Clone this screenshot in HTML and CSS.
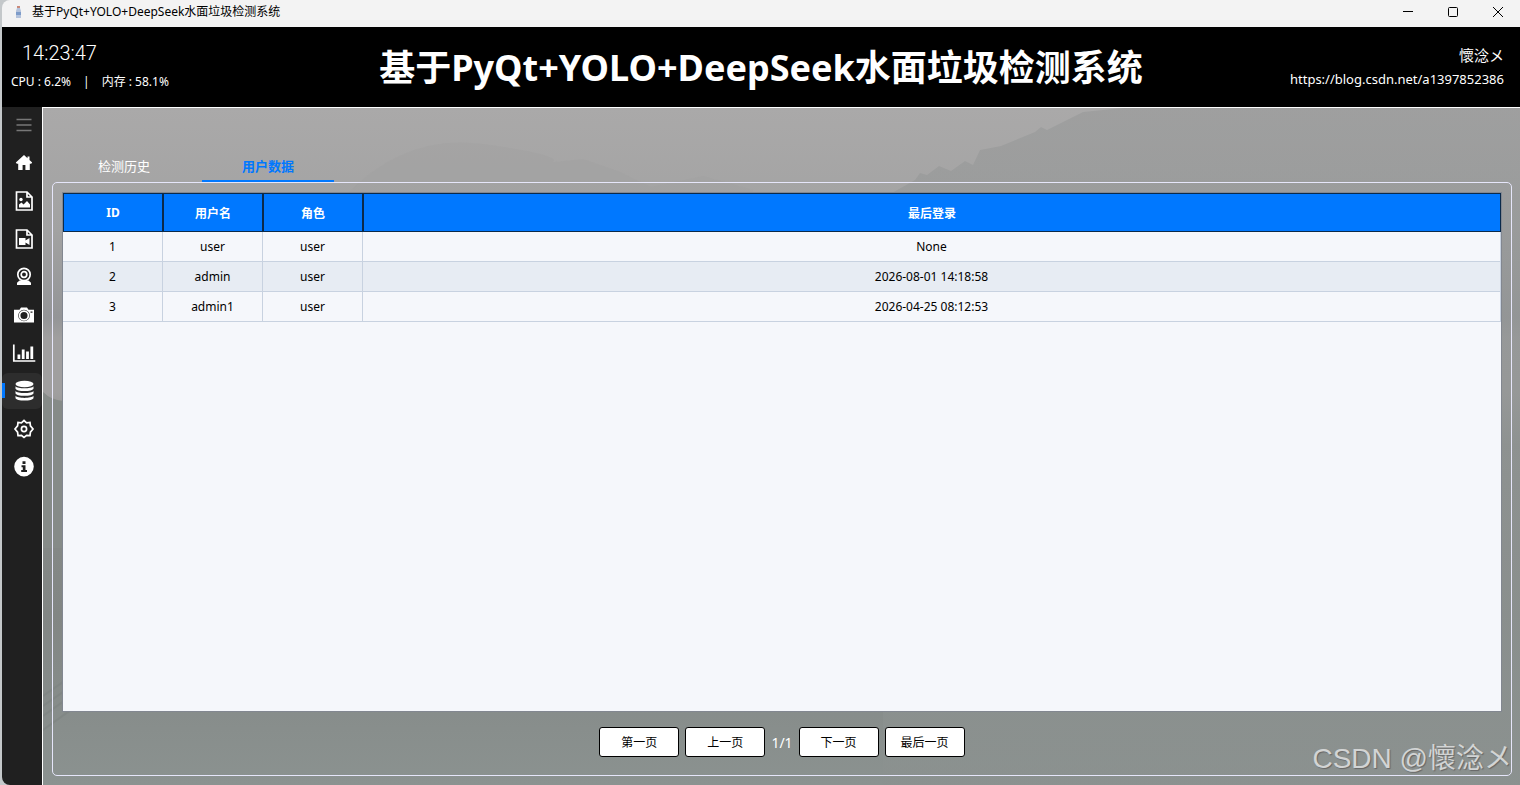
FILE: index.html
```
<!DOCTYPE html>
<html lang="zh-CN">
<head>
    <meta charset="UTF-8">
    <meta name="viewport" content="width=device-width, initial-scale=1.0">
    <title>基于PyQt+YOLO+DeepSeek水面垃圾检测系统</title>
    <link rel="stylesheet" href="styles.css">
</head>
<body>
    <div class="window">
        <div class="titlebar">
            <svg class="app-icon" width="8" height="14" viewBox="0 0 8 14">
                <rect x="3" y="1" width="3" height="2" fill="#c98a7a"/>
                <path d="M3 3h3l1 3v7H2V6z" fill="#b4c3dc"/>
                <rect x="2" y="7" width="5" height="3" fill="#7e9cc9"/>
            </svg>
            <span class="titlebar-text">基于PyQt+YOLO+DeepSeek水面垃圾检测系统</span>
            <div class="window-controls">
                <button type="button" aria-label="最小化"><svg width="12" height="12" viewBox="0 0 12 12"><path d="M1 5.500h10"/></svg></button>
                <button type="button" aria-label="最大化"><svg width="12" height="12" viewBox="0 0 12 12"><rect x="1.500" y="1.500" width="9" height="9" rx="1"/></svg></button>
                <button type="button" aria-label="关闭"><svg width="12" height="12" viewBox="0 0 12 12"><path d="M1 1l10 10M11 1L1 11"/></svg></button>
            </div>
        </div>

        <header class="header">
            <div class="status">
                <div class="clock">14:23:47</div>
                <div class="usage"><span>CPU : 6.2%</span><span>|</span><span>内存 : 58.1%</span></div>
            </div>
            <h1>基于PyQt+YOLO+DeepSeek水面垃圾检测系统</h1>
            <div class="author">
                <div class="author-name">懷淰メ</div>
                <a href="https://blog.csdn.net/a1397852386">https://blog.csdn.net/a1397852386</a>
            </div>
        </header>

        <div class="body">
            <nav class="sidebar">
                <button type="button" class="menu" aria-label="菜单">
                    <svg viewBox="0 0 24 24"><path class="line" d="M4.500 6.500h15M4.500 12h15M4.500 17.500h15"/></svg>
                </button>
                <button type="button" aria-label="首页">
                    <svg viewBox="0 0 24 24"><path d="M12 4L3.800 11.600l1 1.200h1.400V19h4.400v-5h2.800v5h4.400v-6.200h1.400l1-1.200-2.700-2.500V5.500h-2v1.800z"/></svg>
                </button>
                <button type="button" aria-label="图片检测">
                    <svg viewBox="0 0 24 24"><path class="line" d="M4.500 3h10.500l5 5v13H4.500zM15 3v5h5"/><circle cx="9" cy="10.500" r="1.700"/><path d="M7 18.500v-3l2.500-2 2 2 3.500-3.500 3 3.500v3z"/></svg>
                </button>
                <button type="button" aria-label="视频检测">
                    <svg viewBox="0 0 24 24"><path class="line" d="M4.500 3h10.500l5 5v13H4.500zM15 3v5h5"/><path d="M7 11h6.500v2.500l4-2.500v7l-4-2.500V18H7z"/></svg>
                </button>
                <button type="button" aria-label="摄像头">
                    <svg viewBox="0 0 24 24"><circle class="line" cx="12" cy="9.500" r="6.200"/><circle class="line" cx="12" cy="9.500" r="2.800"/><path d="M7.500 15.500h9l2.500 2.200v2.300H5v-2.300z"/></svg>
                </button>
                <button type="button" aria-label="拍照">
                    <svg viewBox="0 0 24 24"><path fill-rule="evenodd" d="M2 6.800h5.500L9 4.500h6l1.500 2.300H22v12.700H2zM12 6.700a5.800 5.800 0 1 0 0 11.600 5.800 5.800 0 0 0 0-11.600zM18.500 8.500v1.200h2V8.500z"/><circle class="line" cx="12" cy="12.500" r="4.400"/></svg>
                </button>
                <button type="button" aria-label="统计">
                    <svg viewBox="0 0 24 24"><path class="line" d="M1.800 3.500v16.500h21.500"/><path d="M5.500 13.500h2.800V18H5.500zM9.800 8.500h2.800V18H9.800zM14.100 10.500h2.800V18h-2.800zM18.400 5.500h2.800V18h-2.800z"/></svg>
                </button>
                <button type="button" class="active" aria-label="数据">
                    <svg viewBox="0 0 24 24"><ellipse cx="12.500" cy="5" rx="9" ry="3.200"/><path d="M3.500 7.200c2 2.800 16 2.800 18 0v2.200c0 3.400-18 3.400-18 0zM3.500 12c2 2.800 16 2.800 18 0v2.200c0 3.400-18 3.400-18 0zM3.500 16.800c2 2.800 16 2.800 18 0V19c0 3.400-18 3.400-18 0z"/></svg>
                </button>
                <button type="button" aria-label="设置">
                    <svg viewBox="0 0 24 24"><path class="line" d="M12 3.500l2.600 2.300 3.400-.3.400 3.400 2.600 3.100-2.600 3.100-.4 3.400-3.400-.2-2.600 2.200-2.600-2.200-3.400.2-.4-3.400L3 12l2.600-3.100.4-3.400 3.400.3z"/><circle class="line" cx="12" cy="12" r="2.600"/></svg>
                </button>
                <button type="button" aria-label="关于">
                    <svg viewBox="0 0 24 24"><path fill-rule="evenodd" d="M12 1.800a9.800 9.800 0 1 0 0 19.600 9.800 9.800 0 0 0 0-19.600zM10.500 6.200h3v2.700h-3zM9.500 10.300h4v4.600H15v2H9.200v-2h1.600v-2.700H9.500z"/></svg>
                </button>
            </nav>

            <main class="content">
                <!-- misty lake backdrop -->
                <svg class="backdrop" viewBox="0 0 1477 677" preserveAspectRatio="none" aria-hidden="true">
                    <defs>
                        <linearGradient id="sky" x1="0" y1="0" x2="0" y2="1">
                            <stop offset="0" stop-color="#aaa9a9"/>
                            <stop offset="0.18" stop-color="#a2a2a2"/>
                            <stop offset="0.31" stop-color="#949597"/>
                            <stop offset="0.34" stop-color="#a09f9f"/>
                            <stop offset="0.42" stop-color="#a09f9f"/>
                            <stop offset="0.5" stop-color="#878b89"/>
                            <stop offset="0.75" stop-color="#828684"/>
                            <stop offset="1" stop-color="#8b9290"/>
                        </linearGradient>
                        <linearGradient id="hill" x1="0" y1="0" x2="0" y2="1">
                            <stop offset="0" stop-color="#9a9b9b"/>
                            <stop offset="0.3" stop-color="#939696"/>
                            <stop offset="1" stop-color="#8b918f"/>
                        </linearGradient>
                    </defs>
                    <rect width="1477" height="677" fill="url(#sky)"/>
                    <path d="M300 90Q360 25 440 36T510 54L540 51 575 63 608 79 660 68 710 82V140H300z" fill="#9f9f9f" opacity="0.4"/>
                    <path d="M840 90L872 72 877 65 884 67 896 58 908 63 922 53 930 57 937 42 958 38 992 24 998 19 1004 22 1040 4 1080 0H1477V677H840z" fill="url(#hill)" opacity="0.7"/>
                    <path d="M0 284Q8 292 20 293V440H0z" fill="#868b88"/>
                    <path d="M0 588L20 574M0 598L20 584M0 608L28 588M0 622L36 596" stroke="#7c8280" stroke-width="2" opacity="0.5"/>
                </svg>

                <div class="tabs" role="tablist">
                    <button type="button" role="tab" aria-selected="false">检测历史</button>
                    <button type="button" role="tab" aria-selected="true" class="selected">用户数据</button>
                </div>

                <section class="panel">
                    <div class="table-frame">
                        <table>
                            <colgroup>
                                <col class="narrow"><col class="narrow"><col class="narrow"><col>
                            </colgroup>
                            <thead>
                                <tr><th>ID</th><th>用户名</th><th>角色</th><th>最后登录</th></tr>
                            </thead>
                            <tbody>
                                <tr><td>1</td><td>user</td><td>user</td><td>None</td></tr>
                                <tr><td>2</td><td>admin</td><td>user</td><td>2026-08-01 14:18:58</td></tr>
                                <tr><td>3</td><td>admin1</td><td>user</td><td>2026-04-25 08:12:53</td></tr>
                            </tbody>
                        </table>
                    </div>
                    <div class="pager">
                        <button type="button">第一页</button>
                        <button type="button">上一页</button>
                        <span>1/1</span>
                        <button type="button">下一页</button>
                        <button type="button">最后一页</button>
                    </div>
                </section>
                <div class="watermark">CSDN @懷淰メ</div>
            </main>
        </div>
    </div>
</body>
</html>
```
FILE: styles.css
```
:root {
    --primary: #0078ff;
    --line: #e6e6fa;
    --grid: #c8d2e0;
}

* {
    box-sizing: border-box;
}

body {
    margin: 0;
    background: #c4c8ca;
    font-family: "Noto Sans", "Noto Sans CJK SC", sans-serif;
    font-size: 12px;
    color: #000;
}

button {
    font: inherit;
    border: 0;
    padding: 0;
    background: none;
}

.window {
    display: flex;
    flex-direction: column;
    min-height: 100vh;
    margin-left: 2px;
    border-radius: 8px 0 0 8px;
    overflow: hidden;
}

/* title bar */
.titlebar {
    display: flex;
    align-items: center;
    height: 27px;
    padding: 0 0 4px 12px;
    background: #f3f3f3;
}

.titlebar-text {
    margin-left: 10px;
    line-height: 20px;
}

.window-controls {
    display: flex;
    margin-left: auto;
}

.window-controls button {
    display: flex;
    align-items: center;
    justify-content: center;
    width: 45px;
    height: 22px;
}

.window-controls svg {
    fill: none;
    stroke: #000;
}

/* header */
.header {
    display: grid;
    grid-template-columns: 1fr auto 1fr;
    align-items: center;
    height: 80px;
    background: #000;
    color: #fff;
}

.header h1 {
    margin: 0;
    padding-top: 2px;
    font-size: 36px;
    line-height: 48px;
}

.status {
    padding-left: 9px;
}

.clock {
    padding-left: 11px;
    font-family: Roboto, sans-serif;
    font-size: 20px;
    font-weight: 300;
    line-height: 30px;
}

.usage {
    display: flex;
    gap: 12px;
    line-height: 28px;
}

.author {
    padding-right: 16px;
    text-align: right;
    font-size: 13px;
    line-height: 24px;
}

.author-name {
    font-size: 15px;
}

.author a {
    color: #fff;
    text-decoration: none;
}

/* sidebar */
.body {
    display: flex;
    flex: 1;
}

.sidebar {
    display: flex;
    flex-direction: column;
    gap: 2px;
    width: 40px;
    background: #202020;
}

.sidebar button {
    display: flex;
    align-items: center;
    justify-content: center;
    height: 36px;
    padding-left: 4px;
    border-radius: 6px;
}

.sidebar svg {
    width: 24px;
    height: 24px;
    fill: #fff;
}

.sidebar .line {
    fill: none;
    stroke: #fff;
    stroke-width: 1.7;
}

.sidebar .menu .line {
    stroke: #777;
}

.sidebar .active {
    position: relative;
    background: #2d2d2d;
}

.sidebar .active::before {
    content: "";
    position: absolute;
    left: 0;
    top: 10px;
    width: 3px;
    height: 15px;
    background: var(--primary);
}

/* content */
.content {
    position: relative;
    display: flex;
    flex: 1;
    flex-direction: column;
    padding: 44px 8px 9px 9px;
    border: 1px solid #fff;
    border-width: 1px 0 0 1px;
}

.backdrop {
    position: absolute;
    top: 0;
    left: 0;
    z-index: -1;
    width: 100%;
    height: 100%;
}

.tabs {
    display: flex;
    gap: 12px;
    padding-left: 6px;
}

.tabs button {
    width: 132px;
    height: 30px;
    padding-bottom: 2px;
    border-bottom: 2px solid transparent;
    font-size: 13px;
    color: #fff;
}

.tabs .selected {
    border-color: var(--primary);
    color: var(--primary);
    font-weight: bold;
}

.panel {
    display: flex;
    flex: 1;
    flex-direction: column;
    padding: 9px;
    border: 1px solid var(--line);
    border-radius: 5px;
}

.table-frame {
    flex: 1;
    border: 1px solid #828790;
    background: #f5f7fb;
}

table {
    width: 100%;
    table-layout: fixed;
    border-collapse: separate;
    border-spacing: 0;
    text-align: center;
}

.narrow {
    width: 100px;
}

th {
    height: 39px;
    padding: 0;
    border: 1px solid #0b2a4a;
    background: var(--primary);
    color: #fff;
}

td {
    height: 30px;
    padding: 0;
    border: 1px solid var(--grid);
    border-width: 0 1px 1px 0;
}

tbody tr:nth-child(even) {
    background: #e7ecf3;
}

.pager {
    display: flex;
    align-items: center;
    justify-content: center;
    gap: 6px;
    padding: 15px 0 9px;
}

.pager button {
    width: 80px;
    height: 30px;
    border: 1px solid #000;
    border-radius: 3px;
    background: #fff;
}

.pager span {
    font-size: 14px;
    color: #fff;
}

.watermark {
    position: absolute;
    right: 8px;
    bottom: 6px;
    font-family: "Liberation Sans", "Noto Sans CJK SC", sans-serif;
    font-size: 28px;
    line-height: 40px;
    color: #d2d4d4;
    text-shadow: 1px 1px 1px #666;
}
```
